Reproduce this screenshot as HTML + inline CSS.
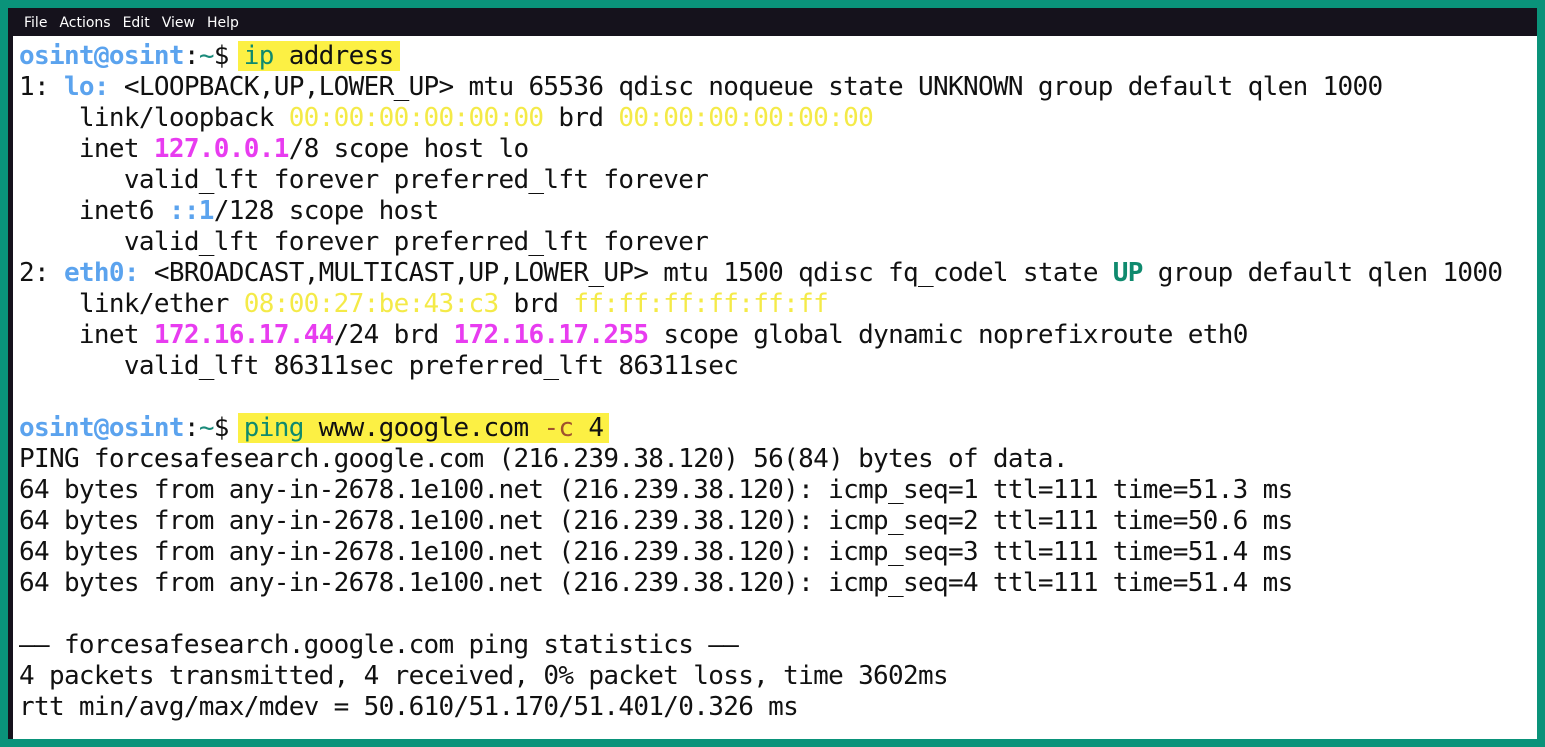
<!DOCTYPE html>
<html><head><meta charset="utf-8"><style>
html,body{margin:0;padding:0;width:1545px;height:747px;overflow:hidden;background:#0a937a}
.win{position:absolute;left:8px;top:8px;width:1529px;height:731px;background:#15121c}
.menu{position:absolute;left:16px;top:0;height:28px;font:14px "DejaVu Sans","Liberation Sans",sans-serif;line-height:30px;color:#fff}
.menu span{margin-right:12px}
.term{position:absolute;left:5px;top:28px;width:1524px;height:703px;background:#fff}
pre{margin:0;padding:5px 0 0 6px;font:26px "DejaVu Sans Mono","Liberation Mono",monospace;line-height:31px;color:#111;letter-spacing:-0.67px}
.p{color:#5ba3ee;font-weight:bold}
.t{color:#1a8a7a}
.b{color:#5ba3ee;font-weight:bold}
.m{color:#e83cf0;font-weight:bold}
.y{color:#f4ea48}
.g{color:#0f8a6e;font-weight:bold}
.hl{background:#fcf044;padding:0 6px 0 6px;margin-left:-6px}
.c{color:#0f8a6e}
.o{color:#a0522d}
</style></head><body>
<div class="win">
<div class="menu"><span>File</span><span>Actions</span><span>Edit</span><span>View</span><span>Help</span></div>
<div class="term"><pre><span class="p">osint@osint</span>:<span class="t">~</span>$ <span class="hl"><span class="c">ip</span> address</span>
1: <span class="b">lo:</span> &lt;LOOPBACK,UP,LOWER_UP&gt; mtu 65536 qdisc noqueue state UNKNOWN group default qlen 1000
    link/loopback <span class="y">00:00:00:00:00:00</span> brd <span class="y">00:00:00:00:00:00</span>
    inet <span class="m">127.0.0.1</span>/8 scope host lo
       valid_lft forever preferred_lft forever
    inet6 <span class="b">::1</span>/128 scope host
       valid_lft forever preferred_lft forever
2: <span class="b">eth0:</span> &lt;BROADCAST,MULTICAST,UP,LOWER_UP&gt; mtu 1500 qdisc fq_codel state <span class="g">UP</span> group default qlen 1000
    link/ether <span class="y">08:00:27:be:43:c3</span> brd <span class="y">ff:ff:ff:ff:ff:ff</span>
    inet <span class="m">172.16.17.44</span>/24 brd <span class="m">172.16.17.255</span> scope global dynamic noprefixroute eth0
       valid_lft 86311sec preferred_lft 86311sec

<span class="p">osint@osint</span>:<span class="t">~</span>$ <span class="hl"><span class="c">ping</span> www.google.com <span class="o">-c</span> 4</span>
PING forcesafesearch.google.com (216.239.38.120) 56(84) bytes of data.
64 bytes from any-in-2678.1e100.net (216.239.38.120): icmp_seq=1 ttl=111 time=51.3 ms
64 bytes from any-in-2678.1e100.net (216.239.38.120): icmp_seq=2 ttl=111 time=50.6 ms
64 bytes from any-in-2678.1e100.net (216.239.38.120): icmp_seq=3 ttl=111 time=51.4 ms
64 bytes from any-in-2678.1e100.net (216.239.38.120): icmp_seq=4 ttl=111 time=51.4 ms

&#8212;&#8212; forcesafesearch.google.com ping statistics &#8212;&#8212;
4 packets transmitted, 4 received, 0% packet loss, time 3602ms
rtt min/avg/max/mdev = 50.610/51.170/51.401/0.326 ms</pre></div>
</div>
</body></html>
